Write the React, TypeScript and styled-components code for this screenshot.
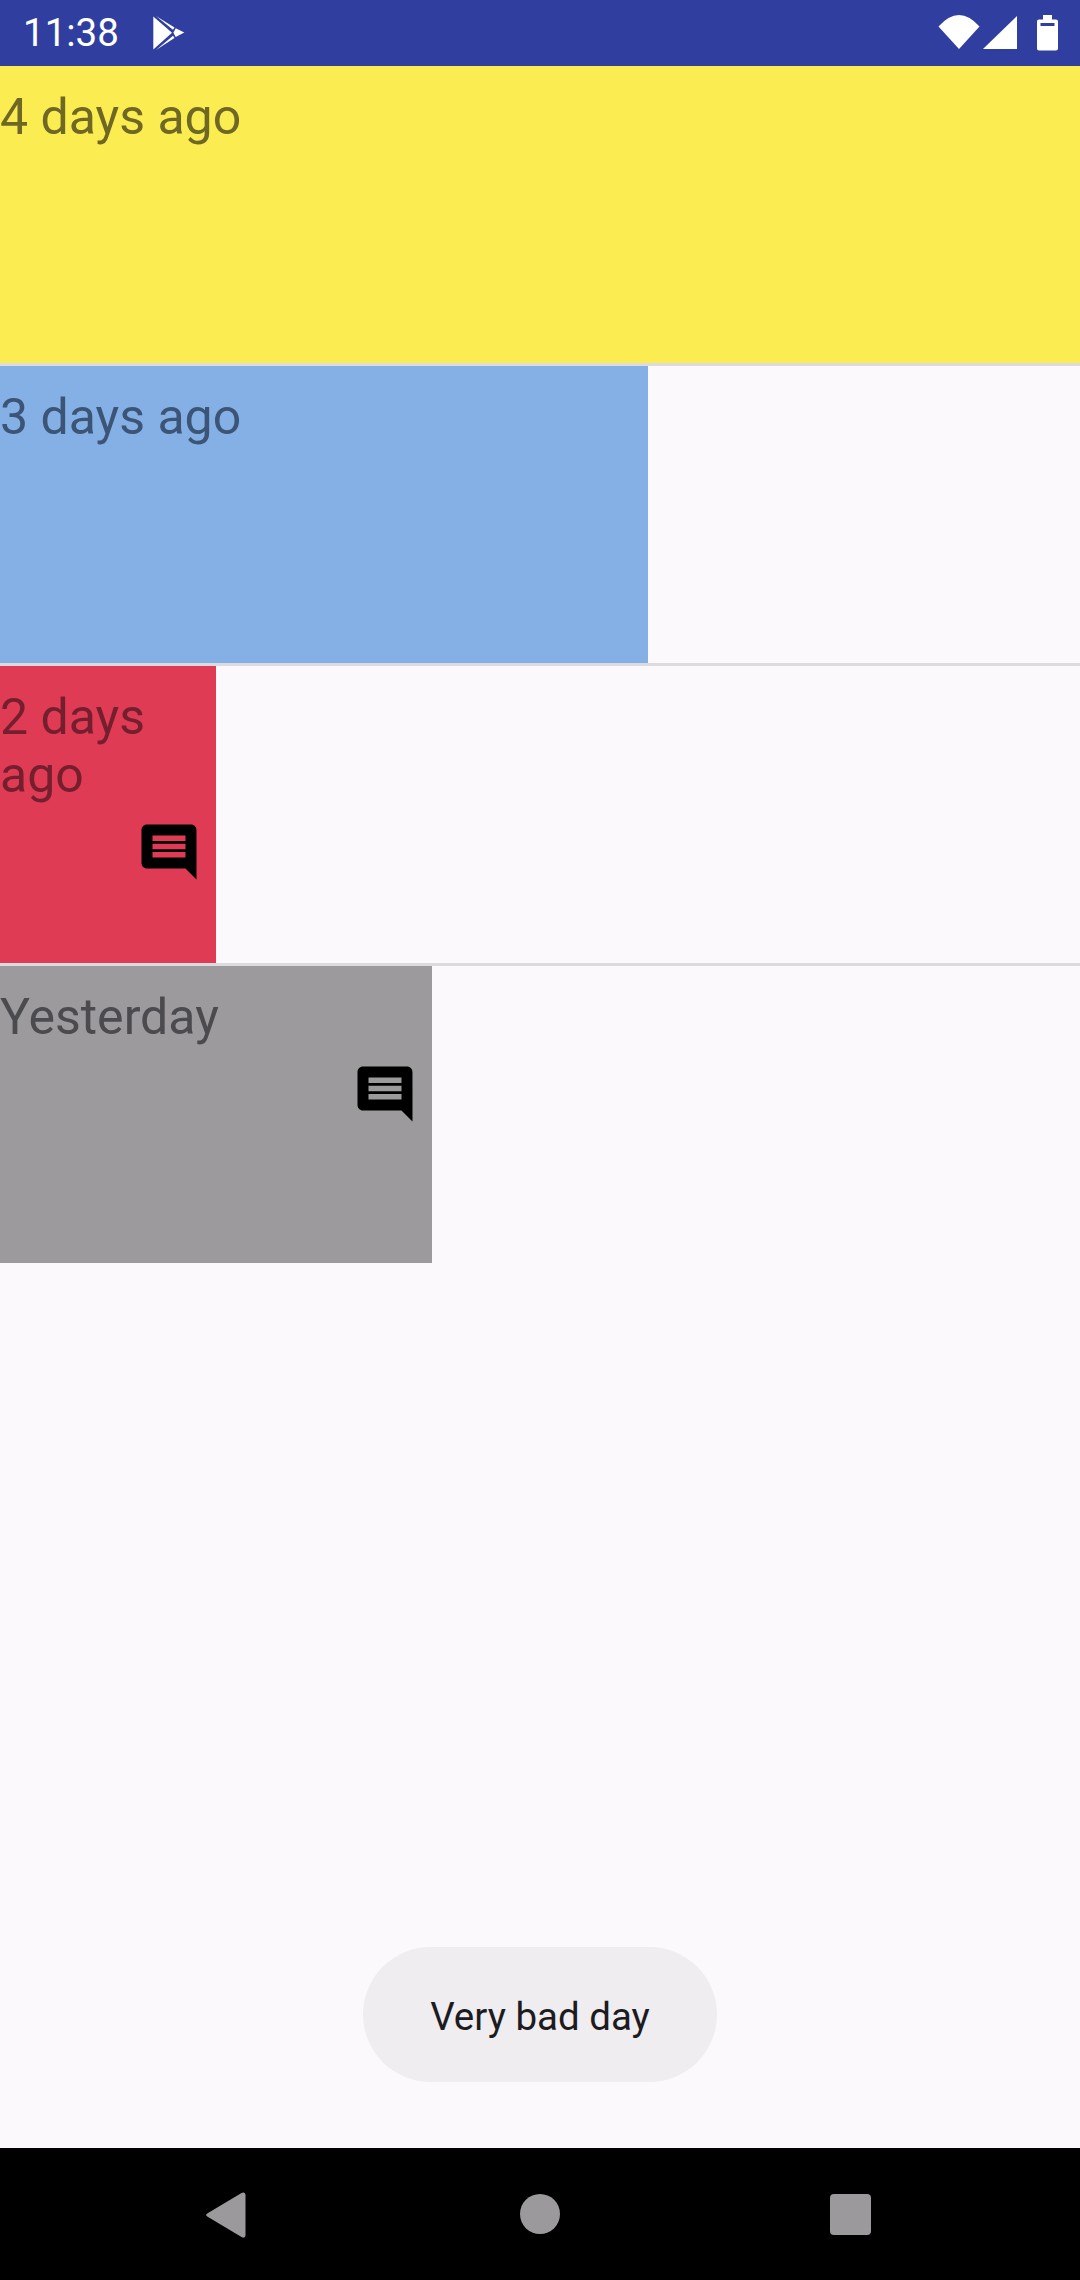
import React from 'react';
import styled, { createGlobalStyle } from 'styled-components';

const GlobalStyle = createGlobalStyle`
  html, body {
    margin: 0;
    padding: 0;
    background: #fbf9fc;
  }
  * {
    box-sizing: border-box;
  }
`;

const Screen = styled.div`
  position: relative;
  width: 1080px;
  height: 2280px;
  display: flex;
  flex-direction: column;
  background: #fbf9fc;
  font-family: Roboto, "Liberation Sans", sans-serif;
  overflow: hidden;
`;

const StatusBar = styled.div`
  flex: none;
  height: 66px;
  display: flex;
  align-items: center;
  padding: 0 22px 0 23px;
  background: #303f9f;
  color: #fff;
`;

const Time = styled.span`
  font-size: 38.5px;
  line-height: 66px;
  width: 130px;
`;

const PlayIcon = styled.svg`
  width: 32px;
  height: 34px;
  fill: #fff;
`;

const StatusIcons = styled.div`
  margin-left: auto;
  display: flex;
  align-items: center;
`;

const WifiIcon = styled.svg`
  width: 42px;
  height: 36px;
  margin-right: 3px;
  fill: #fff;
`;

const SignalIcon = styled.svg`
  width: 35px;
  height: 36px;
  margin-right: 19px;
  fill: #fff;
`;

const BatteryIcon = styled.svg`
  width: 21px;
  height: 36px;
  fill: #fff;
`;

const List = styled.div`
  flex: 1;
  display: flex;
  flex-direction: column;
`;

const Row = styled.div<{ $divided: boolean }>`
  flex: none;
  height: 300px;
  border-bottom: 3px solid ${p => (p.$divided ? '#dcdbe0' : 'transparent')};
`;

const DayBar = styled.div<{ $width: number; $color: string; $text: string }>`
  width: ${p => p.$width}px;
  height: 297px;
  display: flex;
  flex-direction: column;
  padding-top: 22px;
  background: ${p => p.$color};
  color: ${p => p.$text};
`;

const DayLabel = styled.div`
  font-size: 50px;
  line-height: 58px;
`;

const NoteIcon = styled.svg`
  flex: none;
  width: 66px;
  height: 66px;
  margin: 15px 14px 0 auto;
  fill: #000;
`;

const Toast = styled.div`
  position: absolute;
  left: 363px;
  top: 1947px;
  width: 354px;
  height: 135px;
  display: flex;
  align-items: center;
  justify-content: center;
  padding-top: 4px;
  border-radius: 68px;
  background: #efedf0;
  color: #1c1b1f;
  font-size: 38.5px;
`;

const NavBar = styled.div`
  flex: none;
  height: 132px;
  display: flex;
  align-items: flex-start;
  padding: 44px 0 0 206px;
  background: #000;
`;

const BackIcon = styled.svg`
  width: 40px;
  height: 46px;
  fill: #9b999b;
`;

const HomeDot = styled.div`
  width: 40px;
  height: 40px;
  margin: 2px 270px 0 274px;
  border-radius: 50%;
  background: #9b999b;
`;

const RecentSquare = styled.div`
  width: 41px;
  height: 41px;
  margin-top: 2px;
  border-radius: 4px;
  background: #9b999b;
`;

const days = [
  { label: '4 days ago', width: 1080, color: '#fbec52', text: '#6f6824', note: false },
  { label: '3 days ago', width: 648, color: '#85b0e6', text: '#3c5576', note: false },
  { label: '2 days ago', width: 216, color: '#e03b54', text: '#731f2e', note: true },
  { label: 'Yesterday', width: 432, color: '#9c9a9d', text: '#4b4a4e', note: true },
];

export default function App() {
  return (
    <Screen>
      <GlobalStyle />
      <StatusBar>
        <Time>11:38</Time>
        <PlayIcon viewBox="0 0 32 34">
          <path d="M.3 0.5V33.5L19 16.8Z" />
          <path d="M3 0L21.5 11.5L20 13.8Z" />
          <path d="M3 34L21.5 22L20 19.8Z" />
          <path d="M22.7 12.3L31.3 16.6L22.7 21L20.4 16.8Z" />
        </PlayIcon>
        <StatusIcons>
          <WifiIcon viewBox="0 0 42 36">
            <path d="M.5 11.5Q21 -11.5 41.5 11.5L21 34Z" />
          </WifiIcon>
          <SignalIcon viewBox="0 0 35 36">
            <path d="M0 34L34 1V34Z" />
          </SignalIcon>
          <BatteryIcon viewBox="0 0 21 36">
            <path
              fillRule="evenodd"
              d="M6 0H15V4.5H19C20.1 4.5 21 5.4 21 6.5V33.5C21 34.6 20.1 35.5 19 35.5H2C.9 35.5 0 34.6 0 33.5V6.5C0 5.4 .9 4.5 2 4.5H6ZM3.5 8V11H17.5V8Z"
            />
          </BatteryIcon>
        </StatusIcons>
      </StatusBar>
      <List>
        {days.map((d, i) => (
          <Row key={d.label} $divided={i < 3}>
            <DayBar $width={d.width} $color={d.color} $text={d.text}>
              <DayLabel>{d.label}</DayLabel>
              {d.note && (
                <NoteIcon viewBox="0 0 24 24">
                  <path d="M21.99 4c0-1.1-.89-2-1.99-2H4c-1.1 0-2 .9-2 2v12c0 1.1.9 2 2 2h14l4 4-.01-18zM18 14H6v-2h12v2zm0-3H6V9h12v2zm0-3H6V6h12v2z" />
                </NoteIcon>
              )}
            </DayBar>
          </Row>
        ))}
      </List>
      <Toast>Very bad day</Toast>
      <NavBar>
        <BackIcon viewBox="0 0 40 46">
          <path d="M1.2 21.5L35.5 1C37.5 -.2 39.5 .5 39.5 3V43C39.5 45.5 37.5 46.2 35.5 45L1.2 24.5C-.2 23.6 -.2 22.4 1.2 21.5Z" />
        </BackIcon>
        <HomeDot />
        <RecentSquare />
      </NavBar>
    </Screen>
  );
}
